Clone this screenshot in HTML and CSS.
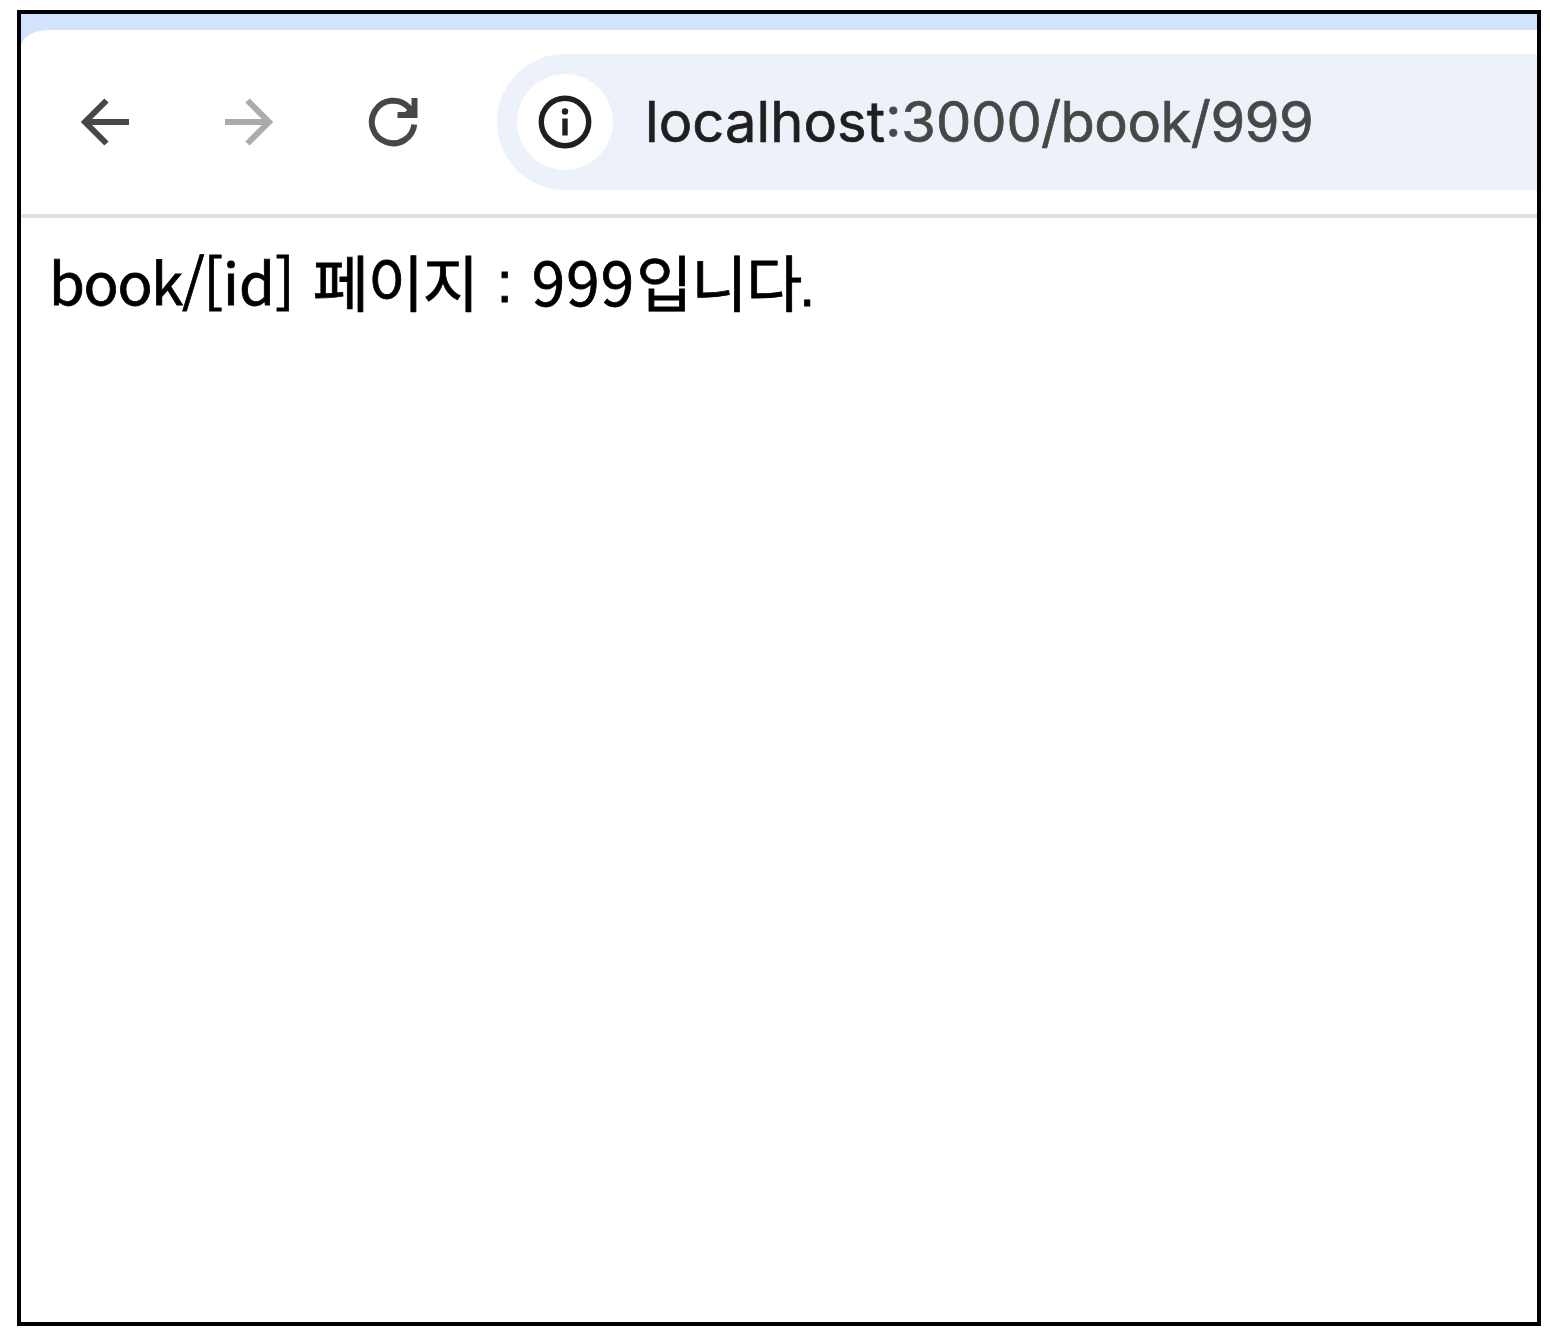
FILE: index.html
```html
<!DOCTYPE html>
<html lang="ko">
<head>
<meta charset="utf-8">
<title>localhost:3000/book/999</title>
<link rel="stylesheet" href="styles.css">
</head>
<body>
<div class="window">
  <header class="tabstrip">
    <nav class="toolbar">
      <svg class="icon back" viewBox="0 0 52 52"><path d="M50 26H6M27.500 4.500L6 26L27.500 47.500"/></svg>
      <svg class="icon forward" viewBox="0 0 52 52"><path d="M2 26H46M24.500 4.500L46 26L24.500 47.500"/></svg>
      <svg class="icon reload" viewBox="0 0 52 52"><path d="M47.300 28.500A21.300 21.300 0 1 1 41.300 11L46 17"/><path class="solid" d="M44.500 2H50.500V22H30.500V16H38L44.500 10Z"/></svg>
      <div class="address">
        <span class="site-info">
          <svg class="info" viewBox="0 0 54 54"><circle cx="27" cy="27" r="23.700"/><path d="M27 23.500V40.500"/><circle class="dot" cx="27" cy="16.500" r="3.200"/></svg>
        </span>
        <span class="url"><span class="host">localhost</span><span class="port">:3000</span><span class="path">/book/999</span></span>
      </div>
    </nav>
  </header>
  <main class="page"><span class="route">book/<span class="param">[id]</span></span> <span class="hangul">페이지</span> <span class="mark colon">:</span> <span class="number">999</span><span class="hangul ending">입니다</span><span class="mark stop">.</span></main>
</div>
</body>
</html>
```
FILE: styles.css
```css
* { box-sizing: border-box; }
body { margin: 0; padding: 10px 9px 8px 17px; height: 1334px; background: #fff; }
.window { height: 1316px; border: 4px solid #000; background: #fff; overflow: hidden; }
.tabstrip { height: 204px; padding-top: 16px; background: #d3e3fd; }
.toolbar { display: flex; align-items: center; height: 188px; padding: 0 0 0 58px; background: #fff; border-bottom: 4px solid #e0e2e0; border-top-left-radius: 28px 17px; }
.icon { flex: none; width: 52px; height: 52px; fill: none; stroke: #474747; stroke-width: 6; }
.forward { margin-left: 92px; stroke: #ababab; }
.reload { margin-left: 92px; }
.icon .solid { fill: #474747; stroke: none; }
.address { display: flex; align-items: center; flex: 1; height: 136px; margin-left: 78px; padding-left: 20px; background: #ecf1fa; border-radius: 68px 0 0 68px; }
.site-info { display: grid; place-items: center; width: 96px; height: 96px; border-radius: 50%; background: #fff; }
.info { width: 54px; height: 54px; fill: none; stroke: #1f1f1f; stroke-width: 5.400; }
.info .dot { fill: #1f1f1f; stroke: none; }
.url { margin-left: 32px; font: 400 56px/68px Inter, "Liberation Sans", sans-serif; color: #474747; -webkit-text-stroke: 0.7px currentColor; white-space: nowrap; }
.host { color: #1f1f1f; letter-spacing: 0.100px; }
.path { margin-left: -1px; letter-spacing: -0.500px; }
.page { padding: 16px 0 0 28px; font: 400 61px/92px "Noto Sans CJK KR", sans-serif; color: #000; white-space: nowrap; -webkit-text-stroke: 0.8px #000; }
.route { margin-right: 1px; font-size: 58px; letter-spacing: -1.300px; vertical-align: 2px; }
.param { letter-spacing: 0; }
.hangul { letter-spacing: -1.100px; }
.colon { display: inline-block; margin-left: 2px; line-height: 1; transform: translateY(-4px); }
.number { margin-left: 2px; font-size: 60px; letter-spacing: 1.200px; vertical-align: 1px; }
.ending { margin-left: 1px; }
.mark { font-family: "Liberation Sans", sans-serif; font-size: 57px; vertical-align: 1px; }
.stop { margin-left: -2px; }
```
